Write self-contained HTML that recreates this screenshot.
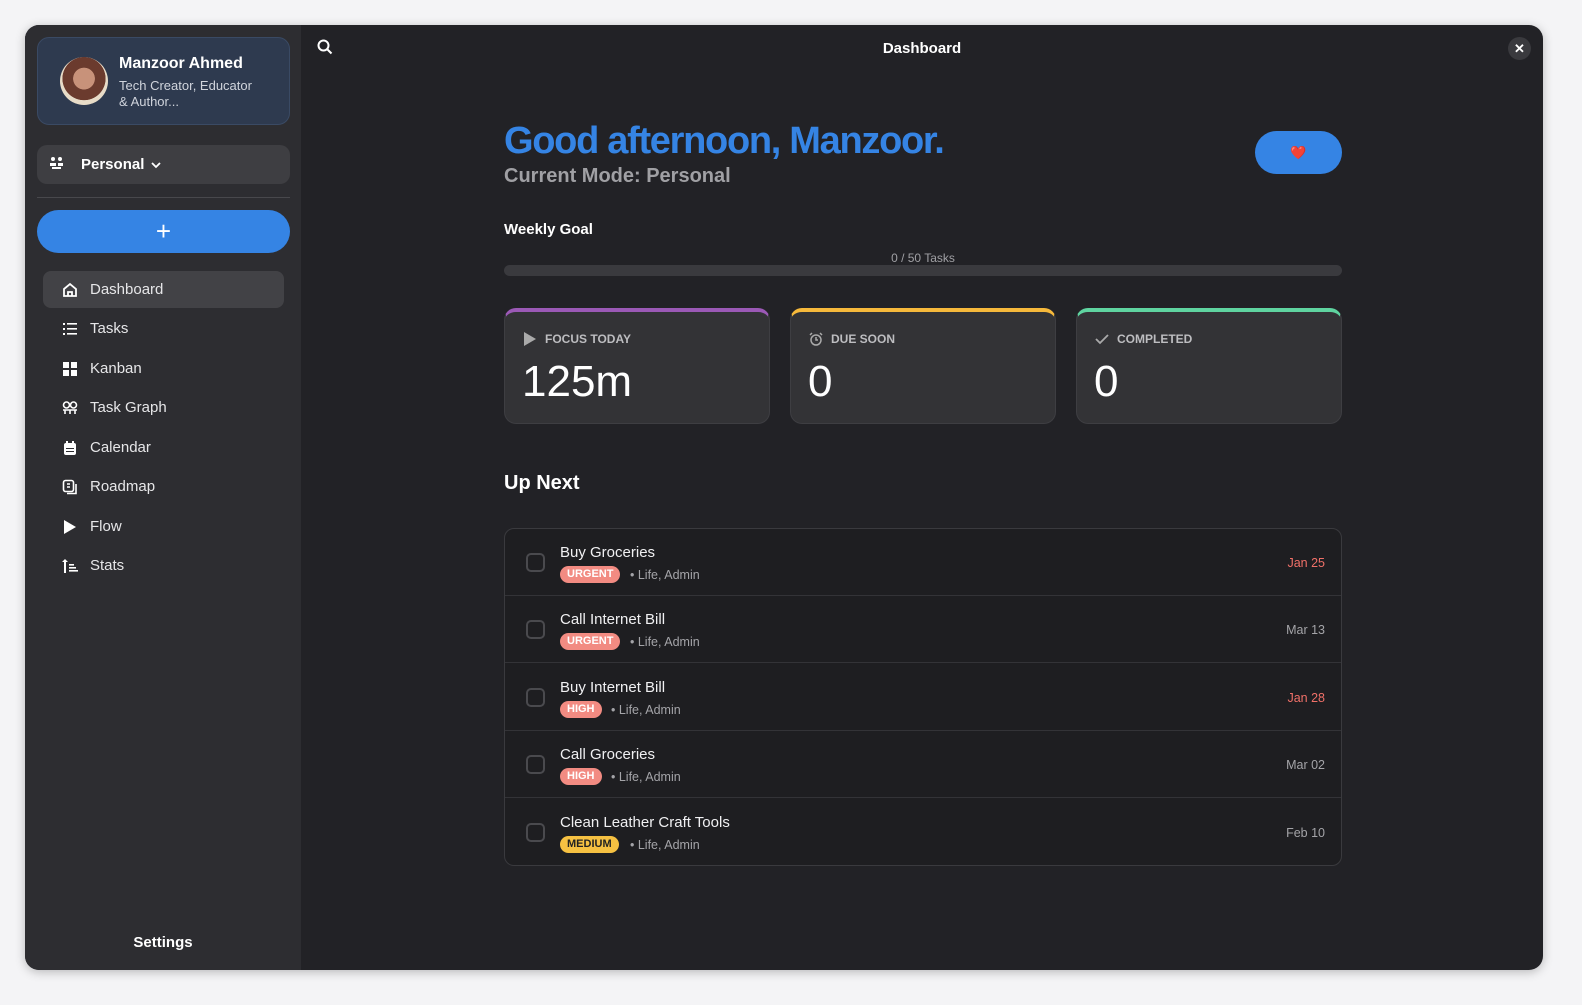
<!DOCTYPE html>
<html><head><meta charset="utf-8"><style>
*{box-sizing:border-box;margin:0;padding:0}
html,body{width:1582px;height:1005px}
body{background:#f4f4f6;font-family:"Liberation Sans",sans-serif;position:relative;overflow:hidden}
.win{position:absolute;left:25px;top:25px;width:1518px;height:945px;border-radius:14px;overflow:hidden;background:#222226;box-shadow:0 2px 10px rgba(0,0,0,.25)}
.side{position:absolute;left:0;top:0;width:276px;height:945px;background:#2d2d31}
.prof{position:absolute;left:12px;top:12px;width:253px;height:88px;border-radius:12px;background:#2e3a4f;border:1px solid #3a4a64}
.av{position:absolute;left:22px;top:19px;width:48px;height:48px;border-radius:50%;background:radial-gradient(circle at 50% 45%,#c8927a 0 30%,#6b3b2e 31% 60%,#e8dcc8 61%)}
.pn{position:absolute;left:81px;top:17px;color:#fff;font-weight:bold;font-size:16px}
.pd{position:absolute;left:81px;top:40px;color:#d0d4dc;font-size:13px;line-height:16px;width:150px}
.mode{position:absolute;left:12px;top:120px;width:253px;height:39px;border-radius:10px;background:#3e3e42;color:#fff;font-weight:bold;font-size:15px}
.hr{position:absolute;left:12px;top:172px;width:253px;height:1px;background:#48484c}
.add{position:absolute;left:12px;top:185px;width:253px;height:43px;border-radius:22px;background:#3584e4;color:#fff;font-size:26px;text-align:center;line-height:42px}
.nav{position:absolute;left:18px;width:241px;height:37px;border-radius:8px;color:#e6e6e8;font-size:15px;line-height:38px;padding-left:47px}
.nav.on{background:#424246}
.nav svg{position:absolute;left:19px;top:11px}
.set{position:absolute;left:0;width:276px;top:909px;text-align:center;color:#fff;font-weight:bold;font-size:15px}
.main{position:absolute;left:276px;top:0;right:0;bottom:0}
.ttl{position:absolute;left:0;right:0;top:15px;text-align:center;color:#fff;font-weight:bold;font-size:15px}
.cls{position:absolute;right:12px;top:12px;width:23px;height:23px;border-radius:50%;background:#3a3a3e;color:#fff;text-align:center;line-height:23px;font-weight:bold;font-size:13px}
h1{position:absolute;left:203px;top:95px;color:#3584e4;font-size:38px;letter-spacing:-1.3px;font-weight:900;white-space:nowrap}
.cm{position:absolute;left:203px;top:140px;color:#a0a0a4;font-size:20px;font-weight:bold}
.heart{position:absolute;left:954px;top:106px;width:87px;height:43px;border-radius:22px;background:#3584e4;text-align:center;line-height:43px;font-size:13px;color:#d22}
.wg{position:absolute;left:203px;top:196px;color:#fff;font-weight:bold;font-size:15px}
.wt{position:absolute;left:203px;width:838px;top:226px;text-align:center;color:#a0a0a4;font-size:12px}
.bar{position:absolute;left:203px;top:240px;width:838px;height:11px;border-radius:6px;background:#3a3a3e}
.card{position:absolute;top:283px;width:266px;height:116px;border-radius:12px;background:#333336;border:1px solid #3e3e42;border-top:4px solid}
.card .l{position:absolute;left:18px;top:20px;color:#bdbdc0;font-size:12px;font-weight:bold;padding-left:22px}
.card .l svg{position:absolute;left:0;top:0}
.card .v{position:absolute;left:17px;top:45px;color:#fff;font-size:44px}
.un{position:absolute;left:203px;top:447px;color:#fff;font-weight:bold;font-size:20px}
.list{position:absolute;left:203px;top:503px;width:838px;height:338px;border:1px solid #3a3a3e;border-radius:10px;background:#1e1e21;overflow:hidden}
.row{position:absolute;left:0;width:838px;height:67px;border-bottom:1px solid #333337}
.cb{position:absolute;left:21px;top:24px;width:19px;height:19px;border:2px solid #4a4a4e;border-radius:5px}
.rt{position:absolute;left:55px;top:15px;color:#f0f0f2;font-size:15px}
.bd{position:absolute;left:55px;top:37px;height:17px;border-radius:9px;color:#fff;font-size:11px;font-weight:bold;line-height:17px;padding:0 7px}
.meta{position:absolute;top:39px;color:#a4a4a8;font-size:12.5px}
.dt{position:absolute;right:18px;top:27px;font-size:12.5px;color:#a4a4a8}
</style></head><body>
<div class="win">
<div class="side">
 <div class="prof"><div class="av"></div><div class="pn">Manzoor Ahmed</div><div class="pd">Tech Creator, Educator<br>&amp; Author...</div></div>
 <div class="mode"><svg style="position:absolute;left:12px;top:11px" width="16" height="16" viewBox="0 0 16 16" fill="#fff"><circle cx="4" cy="3" r="2"/><circle cx="11" cy="3" r="2"/><path d="M1 7h6v3H1zM9 7h5v3H9zM3 11h9v2H3z"/></svg><span style="position:absolute;left:44px;top:11px">Personal</span><svg style="position:absolute;left:113px;top:15px" width="12" height="10" viewBox="0 0 12 10"><path d="M2 3l4 4 4-4" stroke="#fff" stroke-width="1.8" fill="none"/></svg></div>
 <div class="hr"></div>
 <div class="add">+</div>
 <div class="nav on" style="top:246px"><svg width="16" height="16" viewBox="0 0 16 16"><path d="M2 7l6-5 6 5v7H2z M6 14v-4h4v4" stroke="#fff" stroke-width="1.8" fill="none"/></svg>Dashboard</div>
 <div class="nav" style="top:285px"><svg width="16" height="16" viewBox="0 0 16 16" fill="#fff"><rect x="1" y="2" width="2" height="2"/><rect x="1" y="7" width="2" height="2"/><rect x="1" y="12" width="2" height="2"/><rect x="5" y="2" width="10" height="1.6"/><rect x="5" y="7" width="10" height="1.6"/><rect x="5" y="12" width="10" height="1.6"/></svg>Tasks</div>
 <div class="nav" style="top:325px"><svg width="16" height="16" viewBox="0 0 16 16" fill="#fff"><rect x="1" y="1" width="6" height="6"/><rect x="9" y="1" width="6" height="6"/><rect x="1" y="9" width="6" height="6"/><rect x="9" y="9" width="6" height="6"/></svg>Kanban</div>
 <div class="nav" style="top:364px"><svg width="16" height="16" viewBox="0 0 16 16" fill="none" stroke="#fff" stroke-width="1.6"><circle cx="4.5" cy="5" r="3"/><circle cx="11.5" cy="5" r="3"/><path d="M1 10h14M3 10v4M8 10v4M13 10v4"/></svg>Task Graph</div>
 <div class="nav" style="top:404px"><svg width="16" height="16" viewBox="0 0 16 16" fill="#fff"><rect x="2" y="3" width="12" height="12" rx="2"/><rect x="4" y="1" width="2" height="3"/><rect x="10" y="1" width="2" height="3"/><path d="M4 8h8v1H4zM4 11h8v1H4z" fill="#2d2d31"/></svg>Calendar</div>
 <div class="nav" style="top:443px"><svg width="16" height="16" viewBox="0 0 16 16" fill="none" stroke="#fff" stroke-width="1.6"><rect x="1.5" y="1.5" width="10" height="11" rx="2"/><path d="M14 5v9.5H5M5 5h3M5 8h3"/></svg>Roadmap</div>
 <div class="nav" style="top:483px"><svg width="16" height="16" viewBox="0 0 16 16" fill="#fff"><path d="M2 1l12 7-12 7z"/></svg>Flow</div>
 <div class="nav" style="top:522px"><svg width="16" height="16" viewBox="0 0 16 16" fill="#fff"><path d="M3 1l3 3H4v11H2V4H0z"/><rect x="7" y="6" width="5" height="1.6"/><rect x="7" y="9" width="7" height="1.6"/><rect x="7" y="12" width="9" height="1.6"/></svg>Stats</div>
 <div class="set">Settings</div>
</div>
<div class="main">
 <svg style="position:absolute;left:16px;top:14px" width="16" height="16" viewBox="0 0 16 16" fill="none" stroke="#fff" stroke-width="2"><circle cx="6.5" cy="6.5" r="5"/><path d="M10.5 10.5l4 4"/></svg>
 <div class="ttl">Dashboard</div>
 <div class="cls">✕</div>
 <h1>Good afternoon, Manzoor.</h1>
 <div class="cm">Current Mode: Personal</div>
 <div class="heart">❤️</div>
 <div class="wg">Weekly Goal</div>
 <div class="wt">0 / 50 Tasks</div>
 <div class="bar"></div>
 <div class="card" style="left:203px;border-top-color:#9b59b6"><div class="l"><svg width="14" height="14" viewBox="0 0 14 14" fill="#aaa"><path d="M1 0l12 7-12 7z"/></svg>FOCUS TODAY</div><div class="v">125m</div></div>
 <div class="card" style="left:489px;border-top-color:#f6b93b"><div class="l"><svg width="14" height="14" viewBox="0 0 14 14" fill="none" stroke="#aaa" stroke-width="1.5"><circle cx="7" cy="8" r="5"/><path d="M7 5v3h2M1 3l2-2M13 3l-2-2"/></svg>DUE SOON</div><div class="v">0</div></div>
 <div class="card" style="left:775px;border-top-color:#5fd4a0"><div class="l"><svg width="14" height="14" viewBox="0 0 14 14" fill="none" stroke="#aaa" stroke-width="1.8"><path d="M1 7l4 4 8-8"/></svg>COMPLETED</div><div class="v">0</div></div>
 <div class="un">Up Next</div>
 <div class="list">
  <div class="row" style="top:0"><div class="cb"></div><div class="rt">Buy Groceries</div><div class="bd" style="background:#f28b82">URGENT</div><div class="meta" style="left:125px">• Life, Admin</div><div class="dt" style="color:#f07068">Jan 25</div></div>
  <div class="row" style="top:67px"><div class="cb"></div><div class="rt">Call Internet Bill</div><div class="bd" style="background:#f28b82">URGENT</div><div class="meta" style="left:125px">• Life, Admin</div><div class="dt">Mar 13</div></div>
  <div class="row" style="top:135px"><div class="cb"></div><div class="rt">Buy Internet Bill</div><div class="bd" style="background:#f28b82">HIGH</div><div class="meta" style="left:106px">• Life, Admin</div><div class="dt" style="color:#f07068">Jan 28</div></div>
  <div class="row" style="top:202px"><div class="cb"></div><div class="rt">Call Groceries</div><div class="bd" style="background:#f28b82">HIGH</div><div class="meta" style="left:106px">• Life, Admin</div><div class="dt">Mar 02</div></div>
  <div class="row" style="top:270px;border-bottom:none"><div class="cb"></div><div class="rt">Clean Leather Craft Tools</div><div class="bd" style="background:#f6c142;color:#222">MEDIUM</div><div class="meta" style="left:125px">• Life, Admin</div><div class="dt">Feb 10</div></div>
 </div>
</div>
</div>
</body></html>
